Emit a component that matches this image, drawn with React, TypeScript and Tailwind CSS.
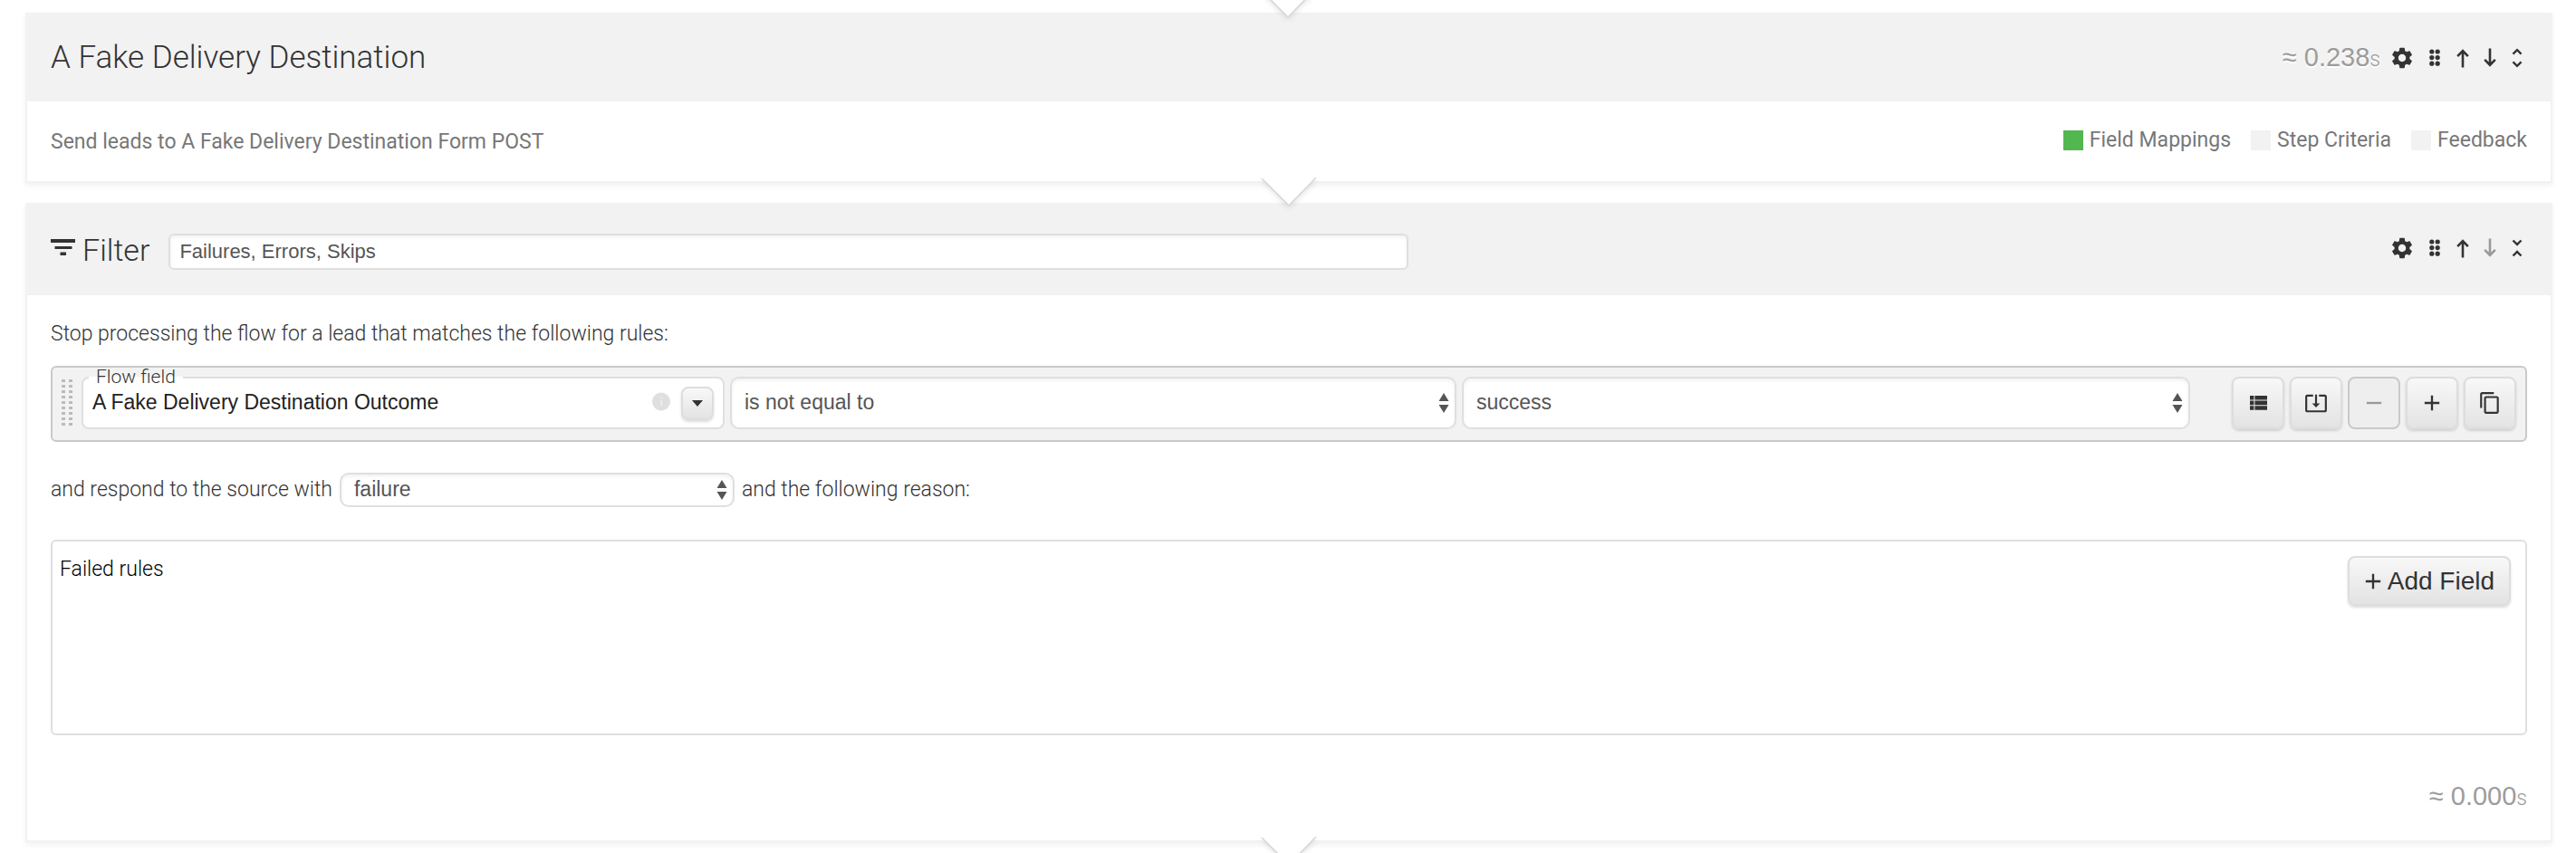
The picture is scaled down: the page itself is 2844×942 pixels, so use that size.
import type { ReactNode } from "react";
import { MdAdd, MdContentCopy, MdRemove, MdSettings, MdSystemUpdateAlt, MdUnfoldLess, MdUnfoldMore } from "react-icons/md";

const controlBase = "border-2 border-[#dfdfdf] bg-white font-['Liberation_Sans',sans-serif] shadow-[inset_0_2px_4px_rgba(0,0,0,0.06)] outline-none";
const raised = "border-2 border-[#dddddd] bg-linear-to-b from-[#f8f8f8] to-[#e3e3e3] shadow-[0_2px_3px_rgba(0,0,0,0.14)]";

/* Downward notch that links one flow step to the next. */
function Notch({ className }: { className: string }) {
  return (
    <svg className={`pointer-events-none absolute left-1/2 z-10 -ml-[35px] ${className}`} width="70" height="46" viewBox="0 0 70 46" fill="none" aria-hidden="true">
      <defs>
        <filter id="notch-shadow" x="-20%" y="-20%" width="140%" height="160%">
          <feDropShadow dx="0" dy="3" stdDeviation="3" floodColor="#000" floodOpacity="0.12" />
        </filter>
      </defs>
      <path d="M5 0 35 30.500 65 0Z" fill="#fff" filter="url(#notch-shadow)" />
      <path d="M5 1 35 31 65 0" stroke="#d9d9d9" strokeWidth="1.600" />
    </svg>
  );
}

function GripIcon() {
  return (
    <svg width="14" height="20" viewBox="0 0 14 20" fill="currentColor" aria-hidden="true">
      {[3, 9.6, 16.2].map((y) => [2.8, 9.2].map((x) => <circle key={`${x}-${y}`} cx={x} cy={y} r="2.6" />))}
    </svg>
  );
}

function ArrowIcon({ down = false }: { down?: boolean }) {
  return (
    <svg width="14" height="22" viewBox="0 0 14 22" fill="none" stroke="currentColor" strokeWidth="2.600" aria-hidden="true">
      <path d={down ? "M7 .5v18M1.200 12.800 7 18.800l5.800-6" : "M7 21.500v-18M1.200 9.200 7 3.200l5.800 6"} />
    </svg>
  );
}

function FilterIcon() {
  return (
    <svg className="mb-1.5" width="27" height="18" viewBox="0 0 27 18" fill="currentColor" aria-hidden="true">
      <path d="M0 0h27v4H0zM4.500 8h19v3h-19zM10.500 14.500h6.500v3.500h-6.500z" />
    </svg>
  );
}

function ListIcon() {
  return (
    <svg width="19" height="16" viewBox="0 0 19 16" fill="currentColor" aria-hidden="true">
      <path d="M0 0h4.400v4.600H0zM5.400 0H19v4.600H5.400zM0 5.600h4.400v4.600H0zM5.400 5.600H19v4.600H5.400zM0 11.200h4.400v4.600H0zM5.400 11.200H19v4.600H5.400z" />
    </svg>
  );
}

function RowGrip() {
  return (
    <svg className="ml-2.5 shrink-0" width="12" height="54" viewBox="0 0 12 54" fill="#bbbbbb" aria-hidden="true">
      {Array.from({ length: 9 }, (_, i) => [0, 8].map((x) => <rect key={`${x}-${i}`} x={x} y={i * 6 + 1} width="4" height="3" />))}
    </svg>
  );
}

function StepControls({ expanded = false, last = false }: { expanded?: boolean; last?: boolean }) {
  return (
    <div className="mr-1 flex items-center gap-4 text-[#333333]">
      <button type="button" aria-label="Settings"><MdSettings size={28} /></button>
      <button type="button" aria-label="Drag step"><GripIcon /></button>
      <button type="button" aria-label="Move up"><ArrowIcon /></button>
      <button type="button" aria-label="Move down" disabled={last} className="disabled:text-[#999999]"><ArrowIcon down /></button>
      <button type="button" aria-label={expanded ? "Collapse" : "Expand"} className="flex w-3.5 justify-center">
        {expanded ? <MdUnfoldLess size={28} className="shrink-0" /> : <MdUnfoldMore size={28} className="shrink-0" />}
      </button>
    </div>
  );
}

function Duration({ value }: { value: string }) {
  return (
    <span className="font-['Liberation_Sans',sans-serif] text-[29px] leading-10 font-normal text-[#9c9c9c] [text-shadow:0_2px_0_#ffffff]">
      ≈ {value}
      <span className="font-['Roboto',sans-serif] text-[23px] font-light">s</span>
    </span>
  );
}

function LegendItem({ label, on = false }: { label: string; on?: boolean }) {
  return (
    <li className="flex items-center gap-[7px]">
      <span className={`size-[22px] ${on ? "bg-[#52b74f]" : "bg-[#f2f2f2]"}`} />
      {label}
    </li>
  );
}

function Select({ id, label, value, options, className, size }: { id: string; label?: string; value: string; options: string[]; className: string; size: string }) {
  return (
    <div className={`relative ${className}`}>
      <select id={id} aria-label={label} defaultValue={value} className={`block w-full appearance-none rounded-[10px] pr-8 pb-0.5 pl-3.5 text-[23px] font-normal text-[#555555] ${size} ${controlBase}`}>
        {options.map((o) => <option key={o}>{o}</option>)}
      </select>
      <svg className="pointer-events-none absolute inset-y-0 right-2 my-auto" width="12" height="22" viewBox="0 0 12 22" fill="#555555" aria-hidden="true">
        <path d="M6 0 11.500 9H.5zM6 22 .5 13h11z" />
      </svg>
    </div>
  );
}

function ActionButton({ label, disabled = false, children }: { label: string; disabled?: boolean; children: ReactNode }) {
  return (
    <button
      type="button"
      aria-label={label}
      disabled={disabled}
      className={`flex h-[58px] w-[58px] shrink-0 items-center justify-center rounded-lg text-[#333333] disabled:border-[#c9c9c9] disabled:from-[#eeeeee] disabled:to-[#eeeeee] disabled:text-[#999999] disabled:shadow-none ${raised}`}
    >
      {children}
    </button>
  );
}

function Card({ header, children }: { header: ReactNode; children: ReactNode }) {
  return (
    <section className="relative border-2 border-t-0 border-[#f2f2f2] bg-white shadow-[0_3px_6px_rgba(0,0,0,0.06)]">
      {header}
      {children}
      <Notch className="top-full -mt-1" />
    </section>
  );
}

export default function App() {
  return (
    <main className="relative overflow-hidden bg-white pt-3.5 pr-[26px] pb-3.5 pl-7 font-['Roboto',sans-serif] text-[23px] leading-7 font-light text-[#333333]">
      <Notch className="-top-3" />
      <div className="flex flex-col gap-[22px]">
        <Card
          header={
            <header className="flex items-center justify-between bg-[#f2f2f2] px-[26px] pt-[26px] pb-6">
              <h2 className="text-[35px] leading-[48px]">A Fake Delivery Destination</h2>
              <div className="flex items-center gap-2.5">
                <Duration value="0.238" />
                <StepControls />
              </div>
            </header>
          }
        >
          <div className="flex items-center justify-between px-[26px] pt-[31px] pb-[29px] font-normal text-[#777777]">
            <p>Send leads to A Fake Delivery Destination Form POST</p>
            <ul className="-my-2 flex gap-[22px] pb-1">
              <LegendItem label="Field Mappings" on />
              <LegendItem label="Step Criteria" />
              <LegendItem label="Feedback" />
            </ul>
          </div>
        </Card>

        <Card
          header={
            <header className="flex items-center justify-between bg-[#f2f2f2] px-[26px] pt-7 pb-[26px]">
              <div className="flex grow items-center">
                <FilterIcon />
                <h2 className="ml-2 text-[34px] leading-[48px]"><label htmlFor="step-name">Filter</label></h2>
                <input id="step-name" defaultValue="Failures, Errors, Skips" className={`mt-1 ml-[21px] h-10 w-[53%] rounded-md px-2.5 text-[22px] font-normal text-[#555555] ${controlBase}`} />
              </div>
              <div className="pb-1">
                <StepControls expanded last />
              </div>
            </header>
          }
        >
          <div className="px-[26px] pt-[29px] pb-[26px]">
            <p>Stop processing the flow for a lead that matches the following rules:</p>

            <div className="mt-[21px] flex items-center rounded-md border-2 border-[#c9c9c9] bg-[#f2f2f2] pt-2.5 pr-2.5 pb-3">
              <RowGrip />
              <div className="ml-2.5 grid min-w-0 grow grid-cols-[710fr_802fr_804fr] gap-1.5">
                <div className="relative flex h-[58px] min-w-0 items-center rounded-lg border-2 border-[#dfdfdf] bg-white pr-2.5">
                  <label htmlFor="flow-field" className="absolute -top-3 left-1.5 bg-linear-to-b from-[#f2f2f2] from-50% to-white to-50% px-2 text-[21px] leading-5">Flow field</label>
                  <input id="flow-field" defaultValue="A Fake Delivery Destination Outcome" className="min-w-0 grow bg-transparent pb-0.5 pl-2.5 font-['Liberation_Sans',sans-serif] text-[23px] font-normal text-[#222222] outline-none" />
                  <svg className="mr-3 shrink-0" width="20" height="24" viewBox="0 0 20 24" aria-hidden="true">
                    <circle cx="10" cy="10.500" r="10" fill="#dfdfdf" />
                    <path d="M9.200 5.500h1.800v2H9.200zM9.200 9h1.800v6.500H9.200z" fill="#ececec" />
                  </svg>
                  <button type="button" aria-label="Choose flow field" className={`flex h-[37px] w-9 shrink-0 items-center justify-center rounded-lg ${raised}`}>
                    <svg width="12" height="7" viewBox="0 0 12 7" fill="#333333" aria-hidden="true"><path d="M0 0h12L6 7z" /></svg>
                  </button>
                </div>
                <Select id="operator" label="Operator" value="is not equal to" options={["is equal to", "is not equal to"]} className="min-w-0" size="h-[58px]" />
                <Select id="outcome" label="Value" value="success" options={["success", "failure", "error", "skipped"]} className="min-w-0" size="h-[58px]" />
              </div>
              <div className="ml-[46px] flex gap-1.5">
                <ActionButton label="Show list"><ListIcon /></ActionButton>
                <ActionButton label="Insert rule group"><MdSystemUpdateAlt size={26} /></ActionButton>
                <ActionButton label="Remove rule" disabled><MdRemove size={28} /></ActionButton>
                <ActionButton label="Add rule"><MdAdd size={28} /></ActionButton>
                <ActionButton label="Duplicate rule"><MdContentCopy size={26} /></ActionButton>
              </div>
            </div>

            <div className="mt-[34px] flex items-center gap-2">
              <label htmlFor="response">and respond to the source with</label>
              <Select id="response" value="failure" options={["failure", "success", "error"]} className="w-[436px]" size="h-[38px]" />
              <label htmlFor="reason">and the following reason:</label>
            </div>

            <div className="relative mt-9">
              <textarea id="reason" defaultValue="Failed rules" className="block h-[216px] w-full resize-none rounded-md border-2 border-[#dfdfdf] bg-white px-2 py-[17px] text-black outline-none" />
              <button type="button" className={`absolute top-[18px] right-[18px] flex h-[55px] items-center gap-0.5 rounded-lg pr-4 pl-3 font-['Liberation_Sans',sans-serif] text-[28px] font-normal text-[#333333] ${raised}`}>
                <MdAdd size={28} />
                Add Field
              </button>
            </div>

            <p className="mt-[47px] flex justify-end"><Duration value="0.000" /></p>
          </div>
        </Card>
      </div>
    </main>
  );
}
